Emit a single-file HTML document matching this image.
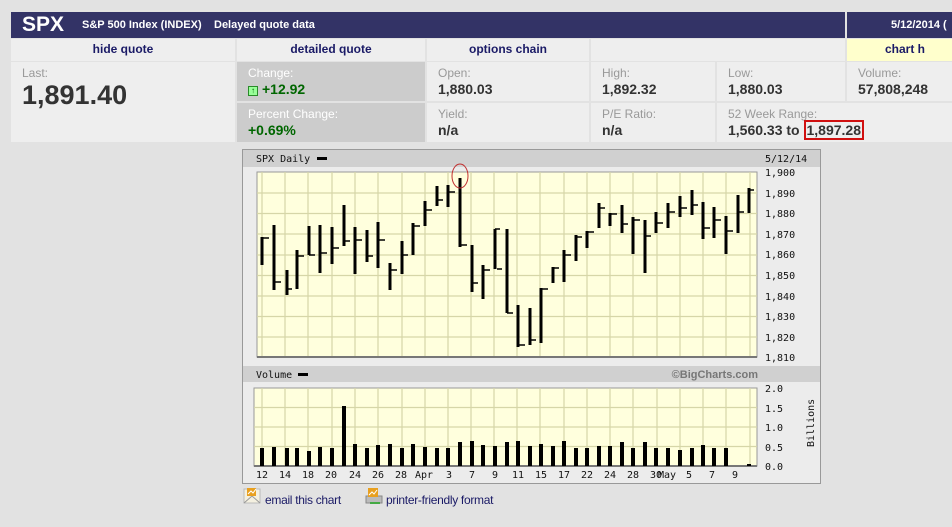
<!DOCTYPE html>
<html><head><meta charset="utf-8"><style>
*{margin:0;padding:0;box-sizing:border-box}
body{width:952px;height:527px;background:#e2e2e2;font-family:"Liberation Sans",Arial,sans-serif;position:relative;overflow:hidden}
.a{position:absolute}
.hdr{left:11px;top:12px;width:834px;height:26px;background:#333366;color:#fff}
.hdr2{left:847px;top:12px;width:105px;height:26px;background:#333366;color:#fff;font-size:11px;font-weight:bold;padding:7px 0 0 44px}
.nav{top:39px;height:22px;background:#eeeeee;color:#1a1a66;font-size:12px;font-weight:bold;text-align:center;line-height:21px}
.cell{background:#eeeeee;padding:4px 11px;font-size:12px}
.lab{color:#999;font-size:12px}
.val{color:#333;font-weight:bold;font-size:14px;margin-top:1px}
.g{background:#cccccc}
.g .lab{color:#fff}
.g .val{color:#006600}
.lk{top:493px;font-size:12px;color:#1a1a66;letter-spacing:-0.3px}
</style></head><body>
<div class="a hdr"><span class="a" style="left:11px;top:1px;font-size:21px;font-weight:bold">SPX</span><span class="a" style="left:71px;top:7px;font-size:11px;font-weight:bold">S&amp;P 500 Index (INDEX)</span><span class="a" style="left:203px;top:7px;font-size:11px;font-weight:bold">Delayed quote data</span></div>
<div class="a hdr2">5/12/2014 (</div>
<div class="a nav" style="left:11px;width:224px">hide quote</div>
<div class="a nav" style="left:237px;width:188px">detailed quote</div>
<div class="a nav" style="left:427px;width:162px">options chain</div>
<div class="a nav" style="left:591px;width:254px"></div>
<div class="a nav" style="left:847px;width:105px;background:#ffffcc;text-align:left;padding-left:38px">chart h</div>

<div class="a cell" style="left:11px;top:62px;width:224px;height:80px"><div class="lab">Last:</div><div style="font-size:27px;font-weight:bold;color:#333;margin-top:0px">1,891.40</div></div>
<div class="a cell g" style="left:237px;top:62px;width:188px;height:39px"><div class="lab">Change:</div><div class="val"><span style="display:inline-block;width:10px;height:10px;border:1px solid #2a8a2a;background:#9f9;font-size:8px;line-height:8px;text-align:center;color:#060;vertical-align:1px;margin-right:4px">↑</span>+12.92</div></div>
<div class="a cell g" style="left:237px;top:103px;width:188px;height:39px"><div class="lab">Percent Change:</div><div class="val">+0.69%</div></div>
<div class="a cell" style="left:427px;top:62px;width:162px;height:39px"><div class="lab">Open:</div><div class="val">1,880.03</div></div>
<div class="a cell" style="left:427px;top:103px;width:162px;height:39px"><div class="lab">Yield:</div><div class="val">n/a</div></div>
<div class="a cell" style="left:591px;top:62px;width:124px;height:39px"><div class="lab">High:</div><div class="val">1,892.32</div></div>
<div class="a cell" style="left:591px;top:103px;width:124px;height:39px"><div class="lab">P/E Ratio:</div><div class="val">n/a</div></div>
<div class="a cell" style="left:717px;top:62px;width:128px;height:39px"><div class="lab">Low:</div><div class="val">1,880.03</div></div>
<div class="a cell" style="left:717px;top:103px;width:235px;height:39px"><div class="lab">52 Week Range:</div><div class="val">1,560.33 to <span style="border:2px solid #d01010;padding:0 1px">1,897.28</span></div></div>
<div class="a cell" style="left:847px;top:62px;width:105px;height:39px"><div class="lab">Volume:</div><div class="val">57,808,248</div></div>

<svg class="a" style="left:0;top:0" width="952" height="527" font-family="'DejaVu Sans Mono','Liberation Mono',monospace" font-size="10">
<rect x="242.5" y="149.5" width="578" height="334" fill="#ececec" stroke="#999"/>
<rect x="243" y="150" width="577" height="17" fill="#d0d0d0"/>
<rect x="243" y="366" width="577" height="16" fill="#d0d0d0"/>
<text x="256" y="162" fill="#111">SPX Daily</text><rect x="317" y="157" width="10" height="3" fill="#000"/>
<text x="765" y="162" fill="#111">5/12/14</text>
<text x="256" y="378" fill="#111">Volume</text><rect x="298" y="373" width="10" height="3" fill="#000"/>
<text x="758" y="378" text-anchor="end" font-family="'Liberation Sans',sans-serif" font-weight="bold" font-size="11" fill="#777">©BigCharts.com</text>
<rect x="257" y="172" width="500" height="185" fill="#ffffdd" stroke="#999"/>
<rect x="254" y="388" width="503" height="78" fill="#ffffdd" stroke="#999"/>
<g stroke="#d6d6a8" stroke-width="1.2">
<path d="M257,193H757M257,213.5H757M257,234H757M257,255H757M257,275.5H757M257,296H757M257,316.5H757M257,337H757"/>
<path d="M262,172V357M285,172V357M308,172V357M332,172V357M355,172V357M378,172V357M402,172V357M425,172V357M448,172V357M471,172V357M494,172V357M517,172V357M540,172V357M564,172V357M587,172V357M610,172V357M633,172V357M657,172V357M680,172V357M703,172V357M726,172V357M750,172V357"/>
<path d="M254,407.5H757M254,427H757M254,446.5H757"/>
<path d="M262,388V466M285,388V466M308,388V466M332,388V466M355,388V466M378,388V466M402,388V466M425,388V466M448,388V466M471,388V466M494,388V466M517,388V466M540,388V466M564,388V466M587,388V466M610,388V466M633,388V466M657,388V466M680,388V466M703,388V466M726,388V466M750,388V466"/>
</g>
<path stroke="#777" stroke-width="2" fill="none" d="M257,357H757M254,466H757"/>
<path stroke="#000" stroke-width="3" fill="none" d="M262,237V265M274,225V290M287,270V295M297,250V289M309,226V255M320,225V273M332,227V264M344,205V246M355,227V274M367,230V262M378,222V268M390,263V290M402,241V274M413,223V255M425,201V226M437,186V206M448,185V207M460,178V247M472,245V292M483,265V299M495,229V269M507,229V313M518,305V347M530,308V345M541,288V343M553,267V283M564,250V282M576,235V261M587,231V248M599,203V228M610,213V226M622,205V233M633,217V254M645,220V273M656,212V233M668,203V228M680,196V217M692,190V215M703,202V239M714,207V238M726,216V254M738,195V233M749,188V213"/>
<path stroke="#000" stroke-width="1.5" fill="none" d="M262,238h5M274,282h5M287,289h5M297,256h5M309,255h5M320,253h5M332,248h5M344,241h5M355,240h5M367,256h5M378,240h5M390,270h5M402,255h5M413,226h5M425,210h5M437,200h5M448,192h5M460,245h5M472,283h5M483,270h5M495,229h5M507,313h5M518,345h5M530,340h5M541,289h5M553,268h5M564,255h5M576,237h5M587,232h5M599,208h5M610,214h5M622,224h5M633,220h5M645,236h5M656,223h5M668,212h5M680,208h5M692,205h5M703,228h5M714,220h5M726,231h5M738,212h5M749,190h5M269,238h-5M281,282h-5M292,289h-5M304,256h-5M315,255h-5M327,253h-5M339,248h-5M350,241h-5M362,240h-5M373,256h-5M385,240h-5M397,270h-5M408,255h-5M420,226h-5M432,210h-5M443,200h-5M455,192h-5M467,245h-5M478,283h-5M490,270h-5M502,269h-5M513,313h-5M525,345h-5M536,340h-5M548,289h-5M559,268h-5M571,255h-5M582,237h-5M594,232h-5M605,208h-5M617,214h-5M628,224h-5M640,220h-5M651,236h-5M663,223h-5M675,212h-5M687,208h-5M698,205h-5M710,228h-5M721,220h-5M733,231h-5M744,212h-5"/>
<ellipse cx="460" cy="176" rx="8" ry="12" fill="none" stroke="#c03030" stroke-width="1"/>
<g fill="#000">
<rect x="260" y="448" width="4" height="18"/><rect x="272" y="447" width="4" height="19"/><rect x="285" y="448" width="4" height="18"/><rect x="295" y="448" width="4" height="18"/><rect x="307" y="451" width="4" height="15"/><rect x="318" y="447" width="4" height="19"/><rect x="330" y="448" width="4" height="18"/><rect x="342" y="406" width="4" height="60"/><rect x="353" y="444" width="4" height="22"/><rect x="365" y="448" width="4" height="18"/><rect x="376" y="445" width="4" height="21"/><rect x="388" y="444" width="4" height="22"/><rect x="400" y="448" width="4" height="18"/><rect x="411" y="444" width="4" height="22"/><rect x="423" y="447" width="4" height="19"/><rect x="435" y="448" width="4" height="18"/><rect x="446" y="448" width="4" height="18"/><rect x="458" y="442" width="4" height="24"/><rect x="470" y="441" width="4" height="25"/><rect x="481" y="445" width="4" height="21"/><rect x="493" y="446" width="4" height="20"/><rect x="505" y="442" width="4" height="24"/><rect x="516" y="441" width="4" height="25"/><rect x="528" y="446" width="4" height="20"/><rect x="539" y="444" width="4" height="22"/><rect x="551" y="446" width="4" height="20"/><rect x="562" y="441" width="4" height="25"/><rect x="574" y="448" width="4" height="18"/><rect x="585" y="448" width="4" height="18"/><rect x="597" y="446" width="4" height="20"/><rect x="608" y="446" width="4" height="20"/><rect x="620" y="442" width="4" height="24"/><rect x="631" y="448" width="4" height="18"/><rect x="643" y="442" width="4" height="24"/><rect x="654" y="448" width="4" height="18"/><rect x="666" y="448" width="4" height="18"/><rect x="678" y="450" width="4" height="16"/><rect x="690" y="448" width="4" height="18"/><rect x="701" y="445" width="4" height="21"/><rect x="712" y="448" width="4" height="18"/><rect x="724" y="448" width="4" height="18"/><rect x="747" y="464" width="4" height="2"/>
</g>
<g fill="#111">
<text x="765" y="176">1,900</text><text x="765" y="197">1,890</text><text x="765" y="217">1,880</text><text x="765" y="238">1,870</text><text x="765" y="258">1,860</text><text x="765" y="279">1,850</text><text x="765" y="300">1,840</text><text x="765" y="320">1,830</text><text x="765" y="341">1,820</text><text x="765" y="361">1,810</text>
<text x="765" y="392">2.0</text><text x="765" y="412">1.5</text><text x="765" y="431">1.0</text><text x="765" y="451">0.5</text><text x="765" y="470">0.0</text>
<text transform="translate(814,447) rotate(-90)">Billions</text>
<text y="478"><tspan x="256">12</tspan><tspan x="279">14</tspan><tspan x="302">18</tspan><tspan x="325">20</tspan><tspan x="349">24</tspan><tspan x="372">26</tspan><tspan x="395">28</tspan><tspan x="415">Apr</tspan><tspan x="446">3</tspan><tspan x="469">7</tspan><tspan x="492">9</tspan><tspan x="512">11</tspan><tspan x="535">15</tspan><tspan x="558">17</tspan><tspan x="581">22</tspan><tspan x="604">24</tspan><tspan x="627">28</tspan><tspan x="650">30</tspan><tspan x="658">May</tspan><tspan x="686">5</tspan><tspan x="709">7</tspan><tspan x="732">9</tspan></text>
</g>
<g>
<rect x="244" y="489" width="16" height="14" fill="#f4f0e0" stroke="#bbb"/><path d="M244,503L252,496L260,503" stroke="#999" fill="none"/><rect x="247" y="488" width="9" height="8" fill="#e8a020"/><path d="M248,494l3,-3l2,2l3,-4" stroke="#fff" fill="none"/>
<rect x="366" y="496" width="16" height="7" fill="#bbb" stroke="#888"/><rect x="370" y="502" width="10" height="2" fill="#4a4"/><rect x="368" y="488" width="10" height="9" fill="#e8a020"/><path d="M369,495l3,-3l2,2l3,-4" stroke="#fff" fill="none"/>
</g>
</svg>
<div class="a lk" style="left:265px">email this chart</div>
<div class="a lk" style="left:386px">printer-friendly format</div>
</body></html>
